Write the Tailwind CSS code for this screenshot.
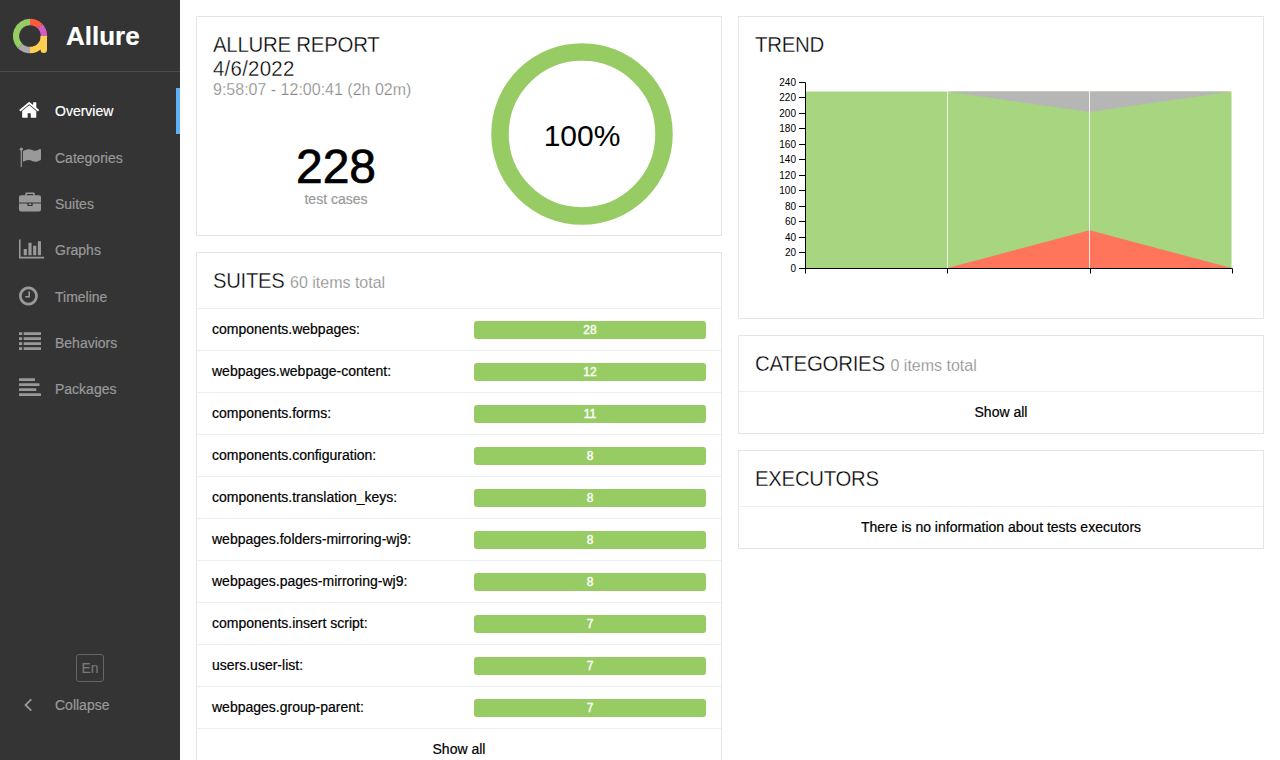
<!DOCTYPE html>
<html lang="en">
<head>
<meta charset="utf-8">
<title>Allure Report</title>
<script src="https://cdn.jsdelivr.net/npm/@tailwindcss/browser@4"></script>
</head>
<body class="h-screen overflow-hidden bg-white font-['Liberation_Sans',Arial,sans-serif] text-sm text-black [-webkit-text-stroke:.2px_currentColor]">
<div class="flex h-full">
  <aside class="flex w-[180px] shrink-0 flex-col bg-[#343434] text-[#999]">
    <div class="flex h-[72px] shrink-0 items-center border-b border-[#4d4d4d] pl-3 text-white">
      <svg class="h-10 w-10" viewBox="12 16 40 40" fill="none" stroke-width="6.4">
        <path d="M30 22a14 14 0 0 0-9.9 23.9" stroke="#97cc64"/>
        <path d="M20.1 45.9A14 14 0 0 0 30 50" stroke="#aaa"/>
        <path d="M30 50A14 14 0 0 0 44 36" stroke="#ffd050"/>
        <path d="M43.8 36v13.9" stroke="#ffd050"/>
        <circle cx="43.8" cy="49.800" r="3.2" fill="#ffd050"/>
        <path d="M39.9 26.1A14 14 0 0 1 44 36" stroke="#d35ebe"/>
        <path d="M30 22a14 14 0 0 1 9.9 4.1" stroke="#fd5a3e"/>
      </svg>
      <span class="pt-0.5 pl-3.5 text-[26px] font-bold">Allure</span>
    </div>
    <nav class="flex flex-col pt-4">
      <a class="flex h-[46.35px] items-center border-r-4 border-[#5eb1f6] pl-[19px] text-white">
        <svg class="mr-2.5 h-[22px] w-[26px] -translate-y-px" viewBox="64 0 2118 1792" fill="currentColor"><path d="M1472 992v480q0 26-19 45t-45 19h-384v-384h-256v384h-384q-26 0-45-19t-19-45v-480q0-1 .5-3t.5-3l575-474 575 474q1 2 1 6zm223-69l-62 74q-8 9-21 11h-3q-13 0-21-7l-692-577-692 577q-12 8-24 7-13-2-21-11l-62-74q-8-10-7-23.5t11-21.5l719-599q32-26 76-26t76 26l244 204v-195q0-14 9-23t23-9h192q14 0 23 9t9 23v408l219 182q10 8 11 21.5t-7 23.5z"/></svg>Overview</a>
      <a class="flex h-[46.35px] items-center pl-[19px]">
        <svg class="mr-2.5 h-[22px] w-[26px] -translate-y-px" viewBox="0 0 26 22" fill="currentColor"><circle cx="2.3" cy="3.2" r="1.6"/><path d="M1.7 3h1.2v17.6a.5.5 0 0 1-.5.5h-.2a.5.5 0 0 1-.5-.5zM3.9 5.3C5.600 4.200 7.600 3.200 9.700 3.200c3 0 4 1.600 6.400 1.600 1.700 0 3.300-.9 4.800-1.700.5-.3 1.100 0 1.100.6v9.500c0 .5-.3.8-.7 1-1.500.8-3.200 1.500-5 1.500-2.700 0-3.800-1.800-6.800-1.800-1.800 0-3.400.8-4.900 1.700-.4.2-.7 0-.7-.4z"/></svg>Categories</a>
      <a class="flex h-[46.35px] items-center pl-[19px]">
        <svg class="mr-2.5 h-[22px] w-[26px] -translate-y-0.5" viewBox="0 0 26 22" fill="currentColor"><path d="M6.300 4.300V2.800c0-.7.500-1.200 1.200-1.200h7c.7 0 1.200.5 1.200 1.200v1.500h4.300a2 2 0 0 1 2 2v5.100H0V6.300a2 2 0 0 1 2-2zM7.900 4.300h6.200V3.100H7.900zM0 12.500h8.300v1.800c0 .5.300.8.800.8h3.800c.5 0 .8-.3.8-.8v-1.800H22V18.500a2 2 0 0 1-2 2H2a2 2 0 0 1-2-2zM9.700 12.500h2.600v1.400H9.700z"/></svg>Suites</a>
      <a class="flex h-[46.35px] items-center pl-[19px]">
        <svg class="mr-2.5 h-[22px] w-[26px] -translate-y-px" viewBox="0 0 2118 1792" fill="currentColor"><path d="M640 896v512h-256v-512h256zm384-512v1024h-256v-1024h256zm1024 1152v128h-2048v-1536h128v1408h1920zm-640-896v768h-256v-768h256zm384-384v1152h-256v-1152h256z"/></svg>Graphs</a>
      <a class="flex h-[46.35px] items-center pl-[19px]">
        <svg class="mr-2.5 h-[22px] w-[26px] -translate-y-px" viewBox="128 0 2118 1792" fill="currentColor"><path d="M1024 544v448q0 14-9 23t-23 9h-320q-14 0-23-9t-9-23v-64q0-14 9-23t23-9h224v-352q0-14 9-23t23-9h64q14 0 23 9t9 23zm416 352q0-148-73-273t-198-198-273-73-273 73-198 198-73 273 73 273 198 198 273 73 273-73 198-198 73-273zm224 0q0 209-103 385.5t-279.5 279.5-385.5 103-385.5-103-279.5-279.5-103-385.5 103-385.5 279.5-279.5 385.5-103 385.5 103 279.5 279.5 103 385.5z"/></svg>Timeline</a>
      <a class="flex h-[46.35px] items-center pl-[19px]">
        <svg class="mr-2.5 h-[22px] w-[26px] -translate-y-0.5" viewBox="0 0 26 22" fill="currentColor"><path d="M0 2.200h3.200v2.900H0zM4.700 2.200H22v2.900H4.700zM0 7.200h3.200v2.900H0zM4.700 7.200H22v2.900H4.700zM0 12.200h3.200v2.900H0zM4.700 12.200H22v2.900H4.700zM0 17.200h3.200v2.900H0zM4.700 17.200H22v2.900H4.700z"/></svg>Behaviors</a>
      <a class="flex h-[46.35px] items-center pl-[19px]">
        <svg class="mr-2.5 h-[22px] w-[26px] -translate-y-0.5" viewBox="0 0 26 22" fill="currentColor"><rect y="2.200" width="16" height="2.900" rx=".6"/><rect y="7.200" width="20.500" height="2.900" rx=".6"/><rect y="12.200" width="17.300" height="2.900" rx=".6"/><rect y="17.200" width="22" height="2.900" rx=".6"/></svg>Packages</a>
    </nav>
    <div class="mt-auto flex flex-col pb-8">
      <div class="flex h-7 w-7 items-center justify-center self-center rounded-[3px] border border-[#666] text-[#777]">En</div>
      <div class="flex h-[46px] items-center pl-[19px]">
        <svg class="mr-2.5 h-[22px] w-[26px]" viewBox="0 0 26 22" fill="none" stroke="currentColor" stroke-width="1.8"><path d="M12.300 5.300 6.500 11l5.800 5.700"/></svg>Collapse</div>
    </div>
  </aside>

  <main class="grid grow grid-cols-2 items-start gap-4 p-4">
    <div class="flex flex-col gap-4">
      <section class="flex h-[220px] border border-[#e5e5e5]">
        <div class="w-[278px] pl-4 pt-4">
          <h2 class="origin-left scale-x-[.93] text-[22px] leading-6 tracking-[-.3px] whitespace-nowrap [-webkit-text-stroke:.35px_white]">ALLURE REPORT<br><span class="tracking-[.25px]">4/6/2022</span></h2>
          <div class="text-base leading-[18px] whitespace-nowrap text-[#888] [-webkit-text-stroke:.25px_white]">9:58:07 - 12:00:41 (2h 02m)</div>
          <div class="pt-[43px] pr-4 text-center">
            <div class="text-5xl leading-[49px] [-webkit-text-stroke:.7px_currentColor]">228</div>
            <div class="leading-4 text-[#999]">test cases</div>
          </div>
        </div>
        <svg class="mt-[26px] ml-4 h-[182px] w-[182px]" viewBox="0 0 182 182">
          <circle cx="91" cy="91" r="82" fill="none" stroke="#97cc64" stroke-width="17.500"/>
          <text x="91" y="103" font-size="30" text-anchor="middle">100%</text>
        </svg>
      </section>
      <section class="border border-[#e5e5e5]">
        <div class="flex h-[55px] items-center pl-4">
          <h2 class="w-[77px] text-[22px] whitespace-nowrap [-webkit-text-stroke:.35px_white]"><span class="inline-block origin-left scale-x-[.92] tracking-[-.3px]">SUITES</span></h2>
          <span class="pt-1 text-base text-[#888] [-webkit-text-stroke:.25px_white]">60 items total</span>
        </div>
        <div id="suites"></div>
        <div class="flex h-[42px] items-center justify-center border-t border-[#eceff1] pb-0.5">Show all</div>
      </section>
    </div>

    <div class="flex flex-col gap-4">
      <section class="h-[303px] border border-[#e5e5e5] pt-4">
        <h2 class="pl-4 text-[22px] leading-6 [-webkit-text-stroke:.35px_white]"><span class="inline-block origin-left scale-x-[.93] tracking-[-.3px]">TREND</span></h2>
        <svg id="trend" class="mt-4 h-[210px] w-[524px]" viewBox="739 73 524 210" font-size="10" text-anchor="end">
          <path d="M805.500 91.600H1231.500V268H805.500z" fill="#a8d57f"/>
          <path d="M947.500 91.600H1231.500L1089.700 112z" fill="#b6b6b6"/>
          <path d="M947.500 268 1089.700 230.300 1231.500 268z" fill="#ff755c"/>
          <path d="M947.500 91v177M1089.500 91v177" stroke="#fff" stroke-opacity=".85"/>
          <path d="M799 82.500H805.500V273.500M799 268.500H1232.500V273.500M947.500 268v5.500M1090.500 268v5.500" fill="none" stroke="#000"/>
        </svg>
      </section>
      <section class="border border-[#e5e5e5]">
        <div class="flex h-[55px] items-center pl-4">
          <h2 class="w-[135.5px] text-[22px] whitespace-nowrap [-webkit-text-stroke:.35px_white]"><span class="inline-block origin-left scale-x-[.93] tracking-[-.3px]">CATEGORIES</span></h2>
          <span class="pt-1 text-base text-[#888] [-webkit-text-stroke:.25px_white]">0 items total</span>
        </div>
        <div class="flex h-[42px] items-center justify-center border-t border-[#eceff1] pb-0.5">Show all</div>
      </section>
      <section class="border border-[#e5e5e5]">
        <div class="flex h-[55px] items-center pl-4">
          <h2 class="text-[22px] whitespace-nowrap [-webkit-text-stroke:.35px_white]"><span class="inline-block origin-left scale-x-[.925] tracking-[-.3px]">EXECUTORS</span></h2>
        </div>
        <div class="flex h-[42px] items-center justify-center border-t border-[#eceff1] pb-0.5">There is no information about tests executors</div>
      </section>
    </div>
  </main>
</div>
<script>
const suites = [["components.webpages",28],["webpages.webpage-content",12],["components.forms",11],["components.configuration",8],["components.translation_keys",8],["webpages.folders-mirroring-wj9",8],["webpages.pages-mirroring-wj9",8],["components.insert script",7],["users.user-list",7],["webpages.group-parent",7]];
document.getElementById("suites").innerHTML = suites.map(([name, n]) =>
  `<div class="flex h-[42px] items-center justify-between border-t border-[#eceff1] px-[15px]"><span class="pb-0.5">${name}:</span><span class="flex h-[18px] w-[232px] items-center justify-center rounded-[3px] bg-[#97cc64] text-xs text-white [-webkit-text-stroke:.4px_currentColor]">${n}</span></div>`).join("");
const svg = document.getElementById("trend");
const NS = "http://www.w3.org/2000/svg";
for (let v = 0; v <= 240; v += 20) {
  const y = Math.floor(268 - v * 0.775 + 1e-6) + 0.5;
  const tick = document.createElementNS(NS, "path");
  tick.setAttribute("d", `M799 ${y}h6`);
  tick.setAttribute("stroke", "#000");
  const label = document.createElementNS(NS, "text");
  label.setAttribute("x", 796);
  label.setAttribute("y", y + 3.200);
  label.textContent = v;
  svg.append(tick, label);
}
</script>
</body>
</html>
